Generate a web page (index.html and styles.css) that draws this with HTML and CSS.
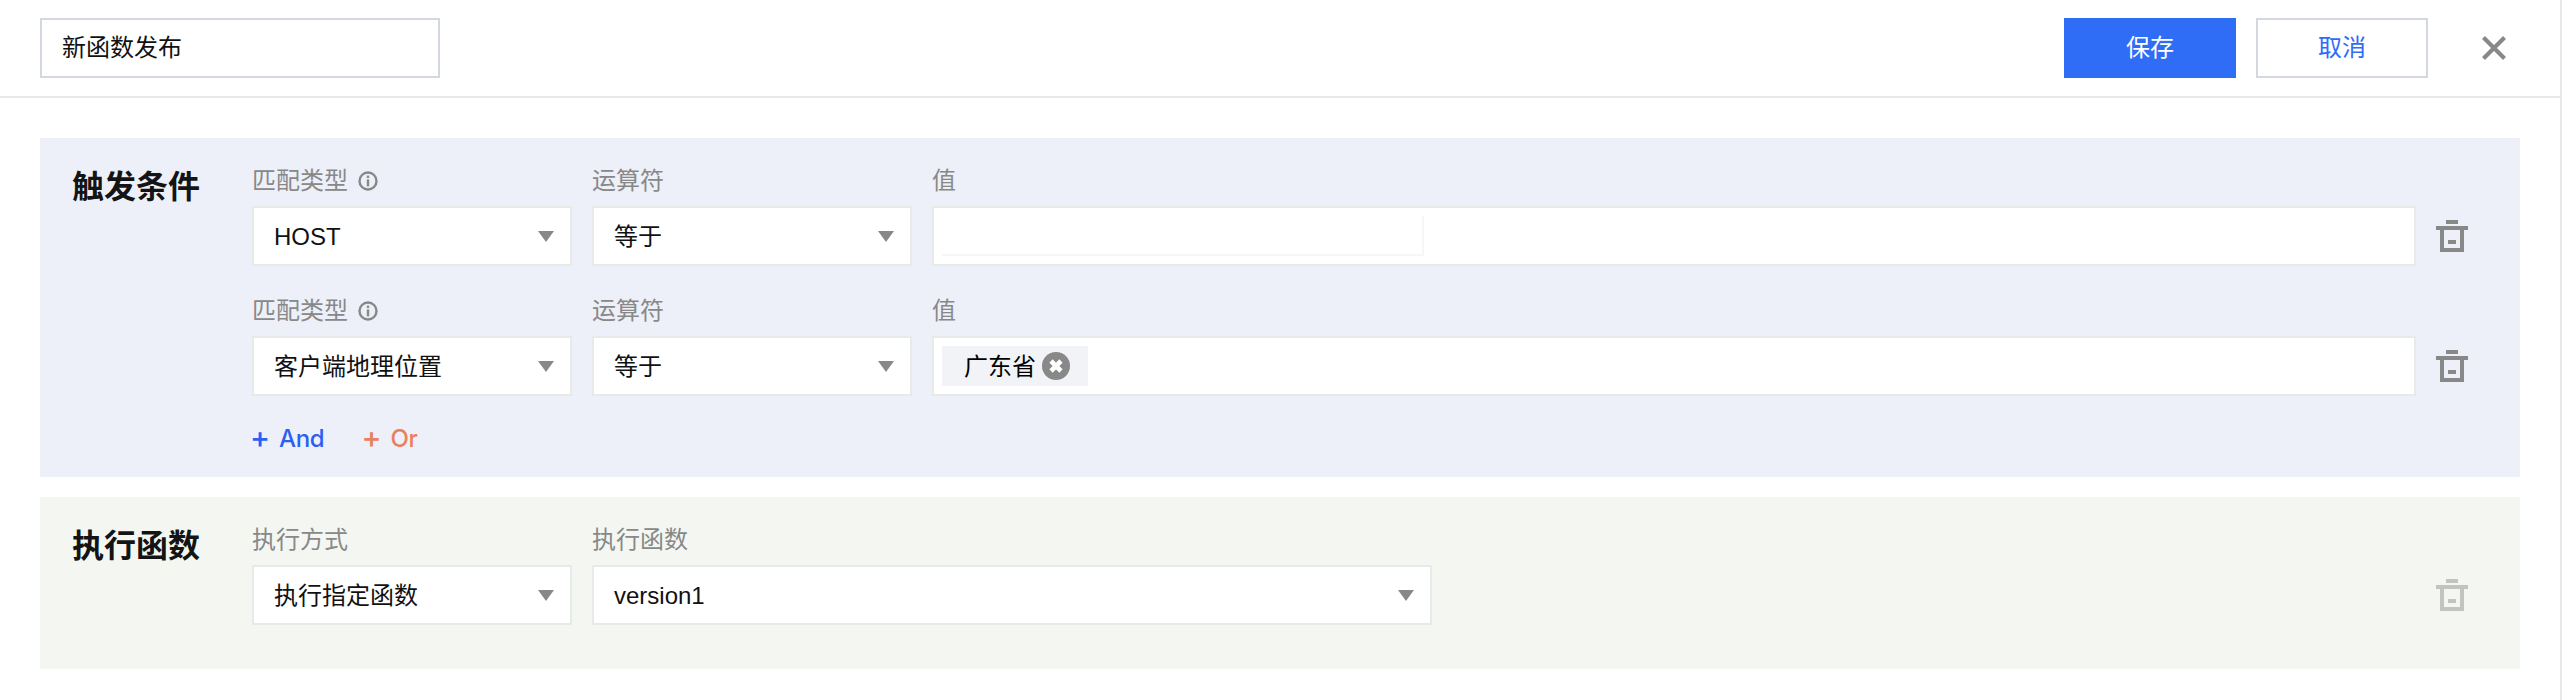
FILE: index.html
```html
<!DOCTYPE html>
<html lang="zh-CN">
<head>
<meta charset="utf-8">
<title>新函数发布</title>
<link rel="stylesheet" href="styles.css">
</head>
<body>
<div class="page">
  <header class="header">
    <div class="name-input">新函数发布</div>
    <div class="header-actions">
      <button class="btn btn-primary">保存</button>
      <button class="btn btn-default">取消</button>
      <svg class="close" viewBox="0 0 24 24"><path d="M1.5 1.5L22.5 22.5M22.5 1.5L1.5 22.5"/></svg>
    </div>
  </header>
  <main class="content">
    <section class="panel panel-trigger">
      <h2 class="panel-title">触发条件</h2>
      <div class="panel-body">
        <div class="row">
          <div class="field field-s">
            <div class="label">匹配类型<svg class="info" viewBox="0 0 20 20"><circle cx="10" cy="10" r="8.5"/><rect class="info-dot" x="8.8" y="4.6" width="2.4" height="2.4"/><rect class="info-dot" x="8.8" y="8.4" width="2.4" height="7"/></svg></div>
            <div class="select"><span>HOST</span><i class="arrow"></i></div>
          </div>
          <div class="field field-s">
            <div class="label">运算符</div>
            <div class="select"><span>等于</span><i class="arrow"></i></div>
          </div>
          <div class="field field-grow">
            <div class="label">值</div>
            <div class="value-input"><div class="ghost"></div></div>
          </div>
          <div class="trash-cell">
            <svg class="trash" viewBox="0 0 32 32"><path d="M10 0h12v4H10zM0 6h32v4H0zM4 10h4v18h16V10h4v22H4zM12 20h8v4h-8z"/></svg>
          </div>
        </div>
        <div class="row">
          <div class="field field-s">
            <div class="label">匹配类型<svg class="info" viewBox="0 0 20 20"><circle cx="10" cy="10" r="8.5"/><rect class="info-dot" x="8.8" y="4.6" width="2.4" height="2.4"/><rect class="info-dot" x="8.8" y="8.4" width="2.4" height="7"/></svg></div>
            <div class="select"><span>客户端地理位置</span><i class="arrow"></i></div>
          </div>
          <div class="field field-s">
            <div class="label">运算符</div>
            <div class="select"><span>等于</span><i class="arrow"></i></div>
          </div>
          <div class="field field-grow">
            <div class="label">值</div>
            <div class="value-input">
              <div class="chip"><span class="chip-text">广东省</span><svg class="chip-x" viewBox="0 0 28 28"><circle cx="14" cy="14" r="14"/><path d="M9 9L19 19M19 9L9 19"/></svg></div>
            </div>
          </div>
          <div class="trash-cell">
            <svg class="trash" viewBox="0 0 32 32"><path d="M10 0h12v4H10zM0 6h32v4H0zM4 10h4v18h16V10h4v22H4zM12 20h8v4h-8z"/></svg>
          </div>
        </div>
        <div class="links">
          <span class="link link-and"><b>+</b>And</span>
          <span class="link link-or"><b>+</b>Or</span>
        </div>
      </div>
    </section>
    <section class="panel panel-action">
      <h2 class="panel-title">执行函数</h2>
      <div class="panel-body">
        <div class="row">
          <div class="field field-s">
            <div class="label">执行方式</div>
            <div class="select"><span>执行指定函数</span><i class="arrow"></i></div>
          </div>
          <div class="field field-l">
            <div class="label">执行函数</div>
            <div class="select"><span>version1</span><i class="arrow"></i></div>
          </div>
          <div class="trash-cell trash-end">
            <svg class="trash trash-off" viewBox="0 0 32 32"><path d="M10 0h12v4H10zM0 6h32v4H0zM4 10h4v18h16V10h4v22H4zM12 20h8v4h-8z"/></svg>
          </div>
        </div>
      </div>
    </section>
  </main>
</div>
</body>
</html>
```

FILE: styles.css
```css
* { box-sizing: border-box; }
html, body { margin: 0; padding: 0; background: #fff; }
body {
  font-family: "Liberation Sans", "Noto Sans CJK SC", sans-serif;
  font-size: 24px;
  color: #111;
}
.page {
  height: 700px;
  border-right: 2px solid #e7e8ec;
}
.header {
  height: 98px;
  padding: 18px 54px 0 40px;
  display: flex;
  justify-content: space-between;
  align-items: flex-start;
  border-bottom: 2px solid #e7e8ec;
}
.name-input {
  width: 400px;
  height: 60px;
  border: 2px solid #d3d8e0;
  padding: 0 20px;
  line-height: 56px;
}
.header-actions { display: flex; align-items: center; }
.btn {
  width: 172px;
  height: 60px;
  font: inherit;
  line-height: 24px;
  padding: 0;
  margin-right: 20px;
  border-radius: 0;
}
.btn-primary { background: #2f6df6; border: 0; color: #fff; }
.btn-default { background: #fff; border: 2px solid #d3d8e0; color: #2f6df6; margin-right: 54px; }
.close { width: 24px; height: 24px; display: block; }
.close path { stroke: #888; stroke-width: 4.2; fill: none; }
.content { padding: 40px 0 0 40px; width: 2520px; }
.panel { display: flex; padding: 30px 52px 0 32px; }
.panel-trigger { background: #edf0f8; height: 339px; margin-bottom: 20px; }
.panel-action { background: #f4f7f1; height: 172px; }
.panel-title {
  flex: none;
  width: 180px;
  margin: 0;
  font-size: 32px;
  line-height: 38px;
  font-weight: 700;
  color: #141414;
}
.panel-body { flex: 1; min-width: 0; }
.row { display: flex; align-items: flex-end; gap: 20px; margin-bottom: 32px; }
.field-s { flex: none; width: 320px; }
.field-l { flex: none; width: 840px; }
.field-grow { flex: 1; min-width: 0; }
.label {
  display: flex;
  align-items: center;
  height: 26px;
  margin-bottom: 12px;
  line-height: 26px;
  color: #888;
}
.info { width: 20px; height: 20px; margin-left: 10px; }
.info circle { fill: none; stroke: #888; stroke-width: 2.4; }
.info-dot { fill: #888; }
.select, .value-input {
  height: 60px;
  background: #fff;
  border: 2px solid #e7ebe8;
}
.select {
  display: flex;
  align-items: center;
  justify-content: space-between;
  padding: 0 16px 0 20px;
  line-height: 26px;
}
.select span { padding-top: 2px; }
.arrow {
  width: 0;
  height: 0;
  border-left: 8px solid transparent;
  border-right: 8px solid transparent;
  border-top: 11px solid #888;
}
.value-input { padding: 8px 8px; }
.ghost {
  width: 482px;
  height: 40px;
  border-right: 2px solid #f6f6f6;
  border-bottom: 2px solid #f6f6f6;
}
.chip {
  display: inline-flex;
  align-items: center;
  height: 40px;
  width: 146px;
  padding-left: 22px;
  background: #f2f3f7;
  color: #000;
  line-height: 24px;
}
.chip-text { padding-top: 2px; }
.chip-x { width: 28px; height: 28px; margin-left: 6px; }
.chip-x circle { fill: #888; }
.chip-x path { stroke: #fff; stroke-width: 4.6; fill: none; }
.trash-cell {
  flex: none;
  height: 60px;
  display: flex;
  align-items: center;
}
.trash-end { margin-left: auto; }
.trash { display: block; width: 32px; height: 32px; fill: #888; }
.trash-off { opacity: 0.45; }
.links {
  display: flex;
  gap: 39px;
  margin-top: -4px;
  line-height: 26px;
  font-family: Inter, "Liberation Sans", sans-serif;
  font-weight: 500;
  letter-spacing: -0.3px;
}
.link { display: inline-flex; align-items: center; }
.link b {
  width: 27px;
  margin-left: -2px;
  margin-right: 2px;
  padding-bottom: 4px;
  font-size: 30px;
  font-weight: 500;
  line-height: 26px;
}
.link-and { color: #2a5ff5; }
.link-or { color: #e9805f; }
```
